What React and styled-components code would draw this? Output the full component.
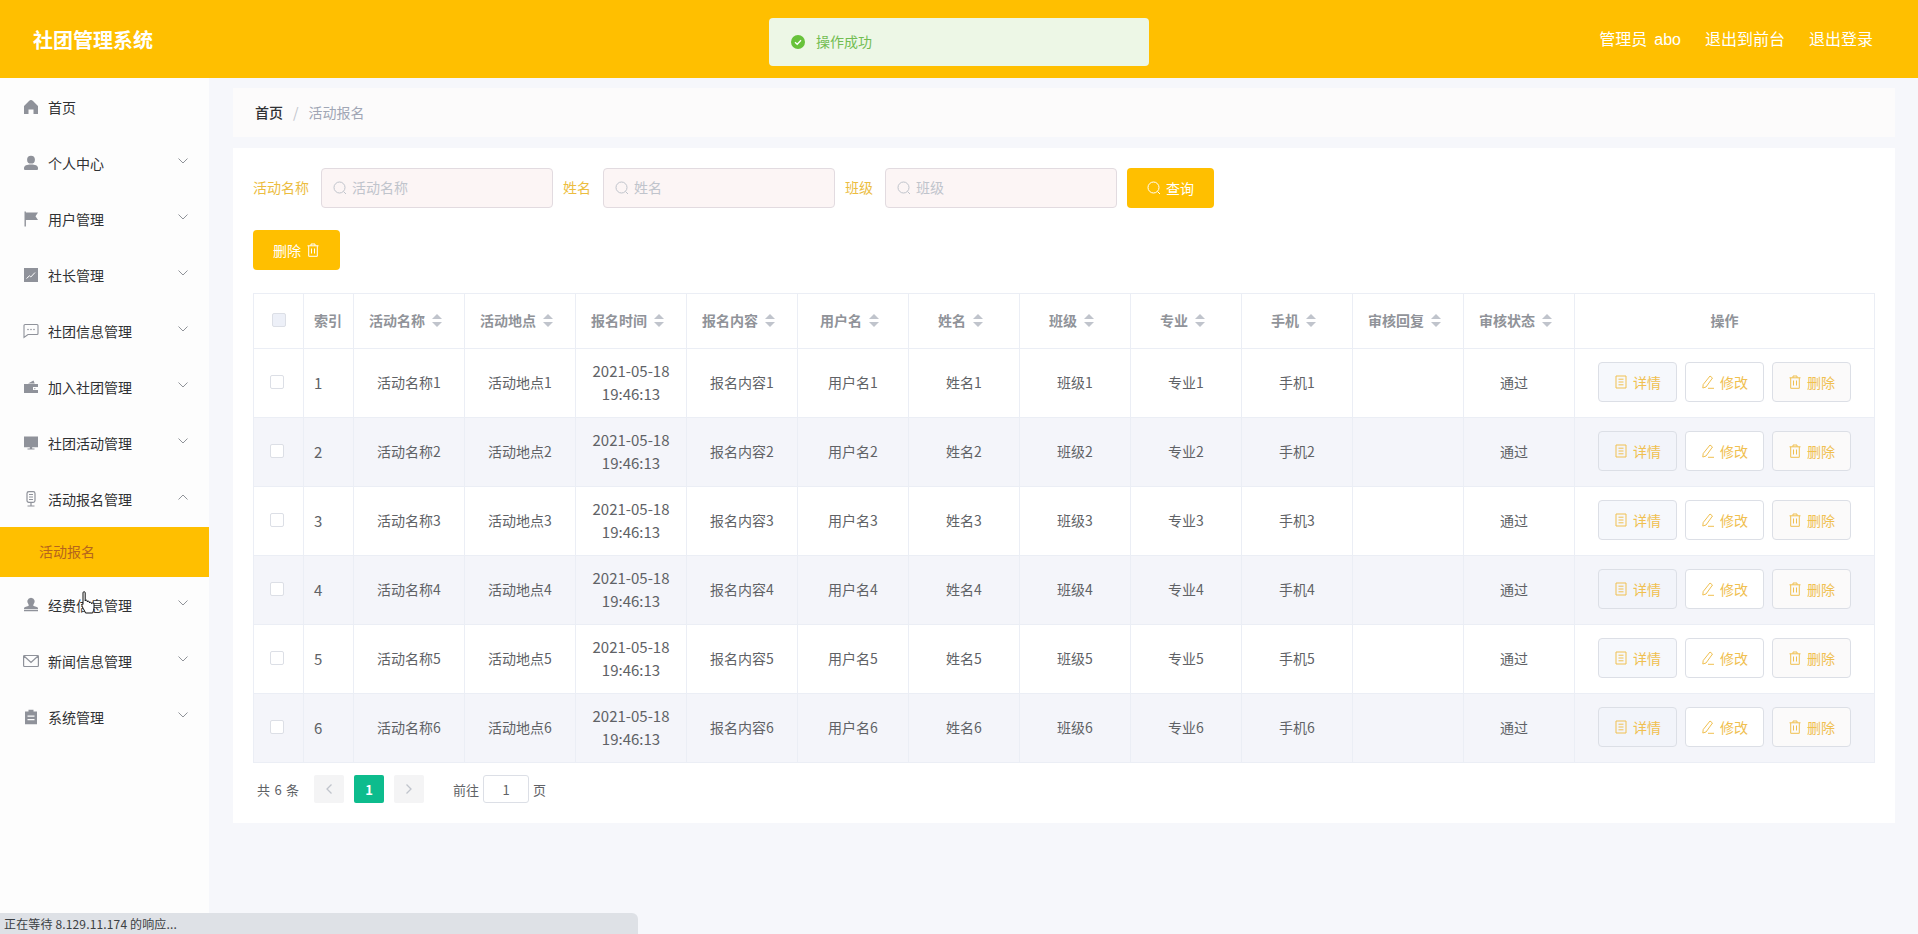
import React from "react";
import styled, { createGlobalStyle } from "styled-components";

const GlobalStyle = createGlobalStyle`
  html, body {
    margin: 0;
    padding: 0;
    height: 100%;
    overflow: hidden;
    background: #f6f7fb;
    font-family: "Noto Sans CJK SC", "Noto Sans", sans-serif;
  }
  * {
    box-sizing: border-box;
  }
`;

// icons of the sidebar, drawn on a 16px box
const iconPaths = {
  home: <path d="M8 1c.7 0 1.300.3 2 1l5 5v8h-4.500v-4.500h-5V15H1V7l5-5c.7-.7 1.300-1 2-1z" />,
  user: (
    <>
      <circle cx="8" cy="4.700" r="3.900" />
      <path d="M1 13c0-2.400 3-3.500 7-3.500s7 1.100 7 3.500v.7c0 .8-.5 1.300-1.300 1.300H2.300C1.500 15 1 14.500 1 13.700z" />
    </>
  ),
  flag: <path d="M1.500.5h1.400v15H1.500zM2.900 1.500H15l-2.500 3.700L15 9H2.900z" />,
  data: (
    <>
      <rect x="1" y="1" width="14" height="14" />
      <path d="M3.500 11.500 6.500 8.800l1.300 1.200L12 5.500" fill="none" stroke="#fff" strokeWidth="1" />
    </>
  ),
  chat: (
    <>
      <path fill="none" stroke="currentColor" strokeWidth="1.100" d="M2 1.500h12a1 1 0 0 1 1 1v8a1 1 0 0 1-1 1H5l-4 3V2.500a1 1 0 0 1 1-1z" />
      <circle cx="5" cy="6.500" r=".8" />
      <circle cx="8" cy="6.500" r=".8" />
      <circle cx="11" cy="6.500" r=".8" />
    </>
  ),
  wallet: (
    <path fillRule="evenodd" d="M1 5h14v9H1zM5 4.500 10.500 1.500l1.200 3zM10 8h5v3h-5zM11.800 9a.6.6 0 1 0 .01 0z" />
  ),
  monitor: <path d="M1 1.500h14v10.800H1zM6.800 12.300h2.400v1.300h2.300v.9h-7v-.9h2.300z" />,
  mic: (
    <>
      <path fill="none" stroke="currentColor" strokeWidth="1.200" d="M4 2.500A1.800 1.800 0 0 1 5.800.7h4.400A1.800 1.800 0 0 1 12 2.500v7a1.800 1.800 0 0 1-1.800 1.800H5.800A1.800 1.800 0 0 1 4 9.500zM8 11.300v3.200M4.500 15h7" />
      <path fill="none" stroke="currentColor" strokeWidth="1" d="M6 3.500h4M6 6h4M6 8.500h4" />
    </>
  ),
  stamp: <path d="M8 .8a3.800 3.800 0 0 1 2.500 6.600c-.4.5-.3 1.300.3 1.700l3 .8c.8.3 1.200.8 1.200 1.500v.6H1v-.6c0-.7.4-1.200 1.200-1.500l3-.8c.6-.4.7-1.200.3-1.700A3.800 3.800 0 0 1 8 .8zM1 12.800h14v1.400H1z" />,
  mail: <path fill="none" stroke="currentColor" strokeWidth="1.200" d="M1.500 2.500h13a.9.9 0 0 1 .9.9v9.200a.9.9 0 0 1-.9.9h-13a.9.9 0 0 1-.9-.9V3.400a.9.9 0 0 1 .9-.9zM1 3l7 6.500L15 3" />,
  clipboard: (
    <path fillRule="evenodd" d="M5.500.8h5v1.700H14V15.300H2V2.500h3.500zM4.500 6.500v1.200h7V6.500zM4.500 10v1.200h7V10z" />
  ),
};

function NavIcon({ name }) {
  return (
    <NavGlyph viewBox="0 0 16 16" fill="currentColor">
      {iconPaths[name]}
    </NavGlyph>
  );
}

function Chevron({ up }) {
  return (
    <ChevronGlyph viewBox="0 0 10 6" fill="none" stroke="currentColor" $up={up}>
      <path d="M.5.5 5 5 9.500.5" />
    </ChevronGlyph>
  );
}

function SearchIcon() {
  return (
    <svg width="14" height="14" viewBox="0 0 14 14" fill="none" stroke="currentColor" strokeWidth="1">
      <circle cx="6.500" cy="6.500" r="5.500" />
      <path d="m10.500 10.500 2.500 2.500" />
    </svg>
  );
}

function TrashIcon() {
  return (
    <svg width="14" height="14" viewBox="0 0 14 14" fill="none" stroke="currentColor" strokeWidth="1">
      <path d="M1.500 2.800h11M5 2.800V1h4v1.800M2.700 2.800v10.500h8.600V2.800M5.500 5.500v5M8.500 5.500v5" />
    </svg>
  );
}

function DocIcon() {
  return (
    <svg width="14" height="14" viewBox="0 0 14 14" fill="none" stroke="currentColor" strokeWidth="1">
      <path d="M2 1h10v12H2zM4.500 4.200h5M4.500 7h5M4.500 9.800h5" />
    </svg>
  );
}

function EditIcon() {
  return (
    <svg width="14" height="14" viewBox="0 0 14 14" fill="none" stroke="currentColor" strokeWidth="1">
      <path d="M9 1 11.500 3 5 12 1.800 13 2.200 9.500zM7 13.300h6" />
    </svg>
  );
}

function PageArrow({ back }) {
  return (
    <svg width="8" height="12" viewBox="0 0 8 12" fill="none" stroke="currentColor" strokeWidth="1.300">
      <path d={back ? "M6.500 1.500 2 6l4.500 4.500" : "M1.500 1.500 6 6l-4.500 4.500"} />
    </svg>
  );
}

const menu = [
  { icon: "home", label: "首页", plain: true },
  { icon: "user", label: "个人中心" },
  { icon: "flag", label: "用户管理" },
  { icon: "data", label: "社长管理" },
  { icon: "chat", label: "社团信息管理" },
  { icon: "wallet", label: "加入社团管理" },
  { icon: "monitor", label: "社团活动管理" },
  { icon: "mic", label: "活动报名管理", open: true },
  { icon: "stamp", label: "经费信息管理" },
  { icon: "mail", label: "新闻信息管理" },
  { icon: "clipboard", label: "系统管理" },
];

const columns = ["活动名称", "活动地点", "报名时间", "报名内容", "用户名", "姓名", "班级", "专业", "手机", "审核回复", "审核状态"];

const rows = [1, 2, 3, 4, 5, 6];

export default function App() {
  return (
    <>
      <GlobalStyle />
      <TopBar>
        <Brand>社团管理系统</Brand>
        <TopLinks>
          <TopLink>管理员 abo</TopLink>
          <TopLink>退出到前台</TopLink>
          <TopLink>退出登录</TopLink>
        </TopLinks>
      </TopBar>

      <Toast>
        <svg width="14" height="14" viewBox="0 0 14 14">
          <circle cx="7" cy="7" r="7" fill="#67c23a" />
          <path d="M4 7.200 6.200 9.300 10 5.200" fill="none" stroke="#fff" strokeWidth="1.300" />
        </svg>
        <ToastText>操作成功</ToastText>
      </Toast>

      <Body>
        <Sidebar>
          {menu.map((m) => (
            <React.Fragment key={m.label}>
              <MenuItem>
                <NavIcon name={m.icon} />
                <MenuLabel>{m.label}</MenuLabel>
                {!m.plain && <Chevron up={m.open} />}
              </MenuItem>
              {m.open && <SubItem>活动报名</SubItem>}
            </React.Fragment>
          ))}
        </Sidebar>

        <Main>
          <Breadcrumb>
            <Crumb $strong>首页</Crumb>
            <CrumbSep>/</CrumbSep>
            <Crumb>活动报名</Crumb>
          </Breadcrumb>

          <Card>
            <FilterRow>
              <FilterLabel>活动名称</FilterLabel>
              <SearchField>
                <SearchIcon />
                <Placeholder>活动名称</Placeholder>
              </SearchField>
              <FilterLabel>姓名</FilterLabel>
              <SearchField>
                <SearchIcon />
                <Placeholder>姓名</Placeholder>
              </SearchField>
              <FilterLabel>班级</FilterLabel>
              <SearchField>
                <SearchIcon />
                <Placeholder>班级</Placeholder>
              </SearchField>
              <PrimaryButton $width={87}>
                <SearchIcon />
                查询
              </PrimaryButton>
            </FilterRow>

            <ActionRow>
              <PrimaryButton $width={87}>
                删除
                <TrashIcon />
              </PrimaryButton>
            </ActionRow>

            <Table>
              <colgroup>
                <col width="50" />
                <col width="50" />
                {columns.map((c) => (
                  <col key={c} width="111" />
                ))}
                <col width="300" />
              </colgroup>
              <thead>
                <tr>
                  <HeadCell>
                    <CheckBox $head />
                  </HeadCell>
                  <HeadCell $left>索引</HeadCell>
                  {columns.map((c) => (
                    <HeadCell key={c}>
                      <HeadInner>
                        {c}
                        <SortCarets>
                          <CaretUp />
                          <CaretDown />
                        </SortCarets>
                      </HeadInner>
                    </HeadCell>
                  ))}
                  <HeadCell>操作</HeadCell>
                </tr>
              </thead>
              <tbody>
                {rows.map((n) => (
                  <BodyRow key={n} $striped={n % 2 === 0}>
                    <Cell>
                      <CheckBox />
                    </Cell>
                    <Cell $left $big>
                      {n}
                    </Cell>
                    <Cell>活动名称{n}</Cell>
                    <Cell>活动地点{n}</Cell>
                    <Cell $big>
                      2021-05-18
                      <br />
                      19:46:13
                    </Cell>
                    <Cell>报名内容{n}</Cell>
                    <Cell>用户名{n}</Cell>
                    <Cell>姓名{n}</Cell>
                    <Cell>班级{n}</Cell>
                    <Cell>专业{n}</Cell>
                    <Cell>手机{n}</Cell>
                    <Cell />
                    <Cell $shifted>通过</Cell>
                    <Cell>
                      <RowActions>
                        <RowButton $kind="detail">
                          <DocIcon />
                          详情
                        </RowButton>
                        <RowButton $kind="edit">
                          <EditIcon />
                          修改
                        </RowButton>
                        <RowButton $kind="delete">
                          <TrashIcon />
                          删除
                        </RowButton>
                      </RowActions>
                    </Cell>
                  </BodyRow>
                ))}
              </tbody>
            </Table>

            <Pagination>
              <Total>共 6 条</Total>
              <PageButton>
                <PageArrow back />
              </PageButton>
              <PageButton $active>1</PageButton>
              <PageButton>
                <PageArrow />
              </PageButton>
              <Jump>
                前往
                <JumpInput>1</JumpInput>
                页
              </Jump>
            </Pagination>
          </Card>
        </Main>
      </Body>

      <HandCursor>
        <svg width="14" height="23" viewBox="0 0 14 23" fill="#fff" stroke="#111" strokeWidth="1" strokeLinejoin="round">
          <path d="M2 1.800C2 .3 4.200.3 4.200 1.800V10C4.200 8.800 6.300 8.800 6.300 10v1C6.300 9.900 8.400 9.900 8.400 11v1c0-1 2.100-1 2.100 0v.6c0-.9 2.500-.9 2.500.5V17c0 2-1 3-1.300 5H4.500C4 20 2.300 18.300 1.200 15.300.5 13.400 1 12.500 2 13.500z" />
        </svg>
      </HandCursor>
      <StatusBar>正在等待 8.129.11.174 的响应...</StatusBar>
    </>
  );
}

const TopBar = styled.header`
  height: 78px;
  background: #ffbf00;
  display: flex;
  align-items: center;
  justify-content: space-between;
  padding: 0 45px 0 33px;
  color: #fff;
`;

const Brand = styled.div`
  font-size: 20px;
  font-weight: 700;
`;

const TopLinks = styled.div`
  display: flex;
  gap: 24px;
  margin-bottom: 2px;
`;

const TopLink = styled.span`
  font-family: "Liberation Sans", "Noto Sans CJK SC", sans-serif;
  font-size: 16px;
  word-spacing: 2.5px;
`;

const Toast = styled.div`
  position: fixed;
  left: 769px;
  top: 18px;
  width: 380px;
  height: 48px;
  display: flex;
  align-items: center;
  gap: 11px;
  padding-left: 22px;
  background: #edf7e6;
  border-radius: 4px;
  font-size: 14px;
`;

const ToastText = styled.span`
  color: #72bd52;
  margin-bottom: 2px;
`;

const Body = styled.div`
  display: flex;
  height: calc(100vh - 78px);
`;

const Sidebar = styled.nav`
  width: 209px;
  flex-shrink: 0;
  padding-top: 1px;
  background: #fdfdfd;
`;

const MenuItem = styled.div`
  height: 56px;
  display: flex;
  align-items: center;
  padding: 0 21px 0 23px;
  font-size: 14px;
  color: #303133;
`;

const NavGlyph = styled.svg`
  width: 16px;
  height: 16px;
  color: #8f929a;
  margin-right: 9px;
  flex-shrink: 0;
`;

const MenuLabel = styled.span`
  flex: 1;
  padding-bottom: 1px;
`;

const ChevronGlyph = styled.svg`
  width: 10px;
  height: 6px;
  color: #909399;
  margin-bottom: 5px;
  transform: ${(p) => (p.$up ? "rotate(180deg)" : "none")};
`;

const SubItem = styled.div`
  height: 50px;
  line-height: 48px;
  padding-left: 39px;
  background: #ffbf00;
  color: #b5651d;
  font-size: 14px;
`;

const Main = styled.main`
  flex: 1;
  padding: 10px 23px 0 24px;
`;

const Breadcrumb = styled.div`
  height: 49px;
  display: flex;
  align-items: center;
  padding: 0 22px 2px;
  margin-bottom: 11px;
  background: #fcfbfb;
  font-size: 14px;
`;

const Crumb = styled.span`
  color: ${(p) => (p.$strong ? "#303133" : "#a0a6b5")};
  font-weight: ${(p) => (p.$strong ? 500 : 400)};
`;

const CrumbSep = styled.span`
  color: #c0c4cc;
  margin: 0 10px;
`;

const Card = styled.section`
  background: #fff;
  padding: 20px 20px 0;
  height: 675px;
`;

const FilterRow = styled.div`
  display: flex;
  align-items: center;
  height: 40px;
`;

const FilterLabel = styled.label`
  color: #ecbd3f;
  font-size: 14px;
  margin-right: 12px;
  padding-bottom: 2px;
`;

const SearchField = styled.div`
  width: 232px;
  height: 40px;
  display: flex;
  align-items: center;
  gap: 5px;
  padding-left: 11px;
  margin-right: 10px;
  background: #fcf5f5;
  border: 1px solid #e2dbe0;
  border-radius: 4px;
  color: #c0c4cc;
  font-size: 14px;
`;

const Placeholder = styled.span`
  padding-bottom: 2px;
`;

const PrimaryButton = styled.button`
  width: ${(p) => p.$width}px;
  height: 40px;
  display: inline-flex;
  align-items: center;
  justify-content: center;
  gap: 5px;
  border: none;
  border-radius: 4px;
  background: #ffbf00;
  color: #fff;
  font: inherit;
  font-size: 14px;
`;

const ActionRow = styled.div`
  margin: 22px 0 23px;
  height: 40px;
`;

const Table = styled.table`
  width: 1621px;
  table-layout: fixed;
  border-collapse: collapse;
  border-top: 1px solid #ebeef5;
  border-left: 1px solid #ebeef5;
  font-size: 14px;
`;

const HeadCell = styled.th`
  height: 55px;
  padding: 0 10px 2px;
  border-right: 1px solid #ebeef5;
  border-bottom: 1px solid #ebeef5;
  color: #909399;
  font-weight: 700;
  text-align: ${(p) => (p.$left ? "left" : "center")};
`;

const HeadInner = styled.span`
  display: inline-flex;
  align-items: center;
`;

const SortCarets = styled.span`
  width: 24px;
  display: inline-flex;
  flex-direction: column;
  align-items: center;
  gap: 3px;
`;

const CaretUp = styled.i`
  width: 0;
  height: 0;
  border: 5px solid transparent;
  border-top: 0;
  border-bottom-color: #c0c4cc;
`;

const CaretDown = styled.i`
  width: 0;
  height: 0;
  border: 5px solid transparent;
  border-bottom: 0;
  border-top-color: #c0c4cc;
`;

const BodyRow = styled.tr`
  background: ${(p) => (p.$striped ? "#f4f5fa" : "#fff")};
`;

const Cell = styled.td`
  height: 69px;
  padding: ${(p) => (p.$shifted ? "0 20px 2px 10px" : "0 10px 2px")};
  border-right: 1px solid #ebeef5;
  border-bottom: 1px solid #ebeef5;
  color: #606266;
  font-size: ${(p) => (p.$big ? "15px" : "14px")};
  line-height: 23px;
  text-align: ${(p) => (p.$left ? "left" : "center")};
`;

const CheckBox = styled.span`
  display: block;
  width: 14px;
  height: 14px;
  margin-left: ${(p) => (p.$head ? "8px" : "6px")};
  background: ${(p) => (p.$head ? "#edf0f8" : "#fff")};
  border: 1px solid #dcdfe6;
  border-radius: 2px;
`;

const RowActions = styled.div`
  display: flex;
  justify-content: center;
  gap: 8px;
`;

const rowButtonBg = { detail: "rgba(240, 243, 250, 0.6)", edit: "#fff", delete: "#fbfafa" };

const RowButton = styled.button`
  width: 79px;
  height: 40px;
  display: inline-flex;
  align-items: center;
  justify-content: center;
  gap: 5px;
  padding: 0;
  border: 1px solid #dcdfe6;
  border-radius: 4px;
  background: ${(p) => rowButtonBg[p.$kind]};
  color: #f0c050;
  font: inherit;
  font-size: 14px;
`;

const Pagination = styled.div`
  display: flex;
  align-items: center;
  height: 28px;
  margin-top: 12px;
  padding-left: 4px;
  font-size: 13px;
  color: #606266;
`;

const Total = styled.span`
  width: 57px;
  word-spacing: 1.5px;
`;

const PageButton = styled.span`
  width: 30px;
  height: 28px;
  margin-right: 10px;
  display: flex;
  align-items: center;
  justify-content: center;
  border-radius: 2px;
  background: ${(p) => (p.$active ? "#0dbc8d" : "#f4f4f5")};
  color: ${(p) => (p.$active ? "#fff" : "#c0c4cc")};
  font-weight: 700;
`;

const Jump = styled.span`
  display: flex;
  align-items: center;
  margin-left: 19px;
`;

const JumpInput = styled.span`
  width: 46px;
  height: 28px;
  margin: 0 4px;
  display: flex;
  align-items: center;
  justify-content: center;
  border: 1px solid #dcdfe6;
  border-radius: 3px;
  background: #fff;
`;

const HandCursor = styled.div`
  position: fixed;
  left: 81px;
  top: 591px;
  line-height: 0;
`;

const StatusBar = styled.div`
  position: fixed;
  left: 0;
  bottom: 0;
  width: 638px;
  height: 21px;
  padding-left: 4px;
  display: flex;
  align-items: center;
  background: #dee1e6;
  border-top-right-radius: 6px;
  color: #3c4043;
  font-size: 12px;
  letter-spacing: 0.15px;
`;
